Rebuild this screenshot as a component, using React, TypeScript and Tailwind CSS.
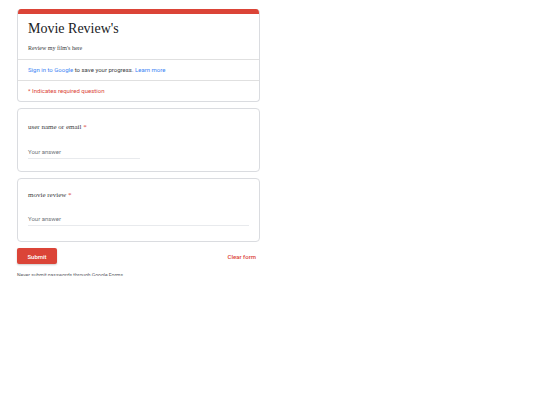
export default function App() {
  return (
    <div className="h-[405px] w-[540px] bg-white">
      <div className="h-[276px] w-[277px] overflow-hidden">
        <div className="flex w-[277px] flex-col gap-[6px] px-[17px] pt-[9px] font-['Roboto',sans-serif]">
          <div className="overflow-hidden rounded-[4px] border border-t-0 border-[#dadce0] bg-white">
            <div className="h-[5px] bg-[#db4437]" />
            <div className="border-b border-[#e0e0e0] px-[10px] pb-[7px] pt-[7px]">
              <h1 className="font-['Liberation_Serif',serif] text-[14px] leading-[16px] text-[#202124]">
                Movie Review's
              </h1>
              <p className="mt-[7px] font-['Liberation_Serif',serif] text-[6px] leading-[8px] text-[#3c4043]">
                Review my film's here
              </p>
            </div>
            <div className="border-b border-[#e0e0e0] px-[10px] py-[5px] text-[6px] leading-[10px] text-[#3c4043]">
              <span className="text-[#4285f4]">Sign in to Google</span> to save your progress.{" "}
              <span className="text-[#4285f4]">Learn more</span>
            </div>
            <div className="px-[10px] py-[5px] text-[6px] leading-[10px] text-[#db4437]">
              * Indicates required question
            </div>
          </div>

          <div className="rounded-[4px] border border-[#dadce0] bg-white px-[10px] pb-[12px] pt-[13px]">
            <div className="font-['Liberation_Serif',serif] text-[7px] leading-[10px] text-[#3c4043]">
              user name or email <span className="text-[#db4437]">*</span>
            </div>
            <div className="mt-[15px] w-[112px] border-b border-[#e8eaed] pb-[2px] text-[6px] leading-[9px] text-[#70757a]">
              Your answer
            </div>
          </div>

          <div className="rounded-[4px] border border-[#dadce0] bg-white px-[10px] pb-[15px] pt-[11px]">
            <div className="font-['Liberation_Serif',serif] text-[7px] leading-[10px] text-[#3c4043]">
              movie review <span className="text-[#db4437]">*</span>
            </div>
            <div className="mt-[14px] w-full border-b border-[#e8eaed] pb-[2px] text-[6px] leading-[9px] text-[#70757a]">
              Your answer
            </div>
          </div>

          <div className="flex items-center justify-between">
            <button className="h-[16px] w-[40px] rounded-[2px] bg-[#db4437] text-[6px] font-medium text-white shadow-[0_1px_2px_rgba(0,0,0,0.2)]">
              Submit
            </button>
            <span className="pr-[4px] text-[6px] font-medium text-[#db4437]">Clear form</span>
          </div>

          <div className="mt-[1px] text-[5px] leading-[8px] text-[#5f6368]">
            Never submit passwords through Google Forms.
          </div>
        </div>
      </div>
    </div>
  );
}
